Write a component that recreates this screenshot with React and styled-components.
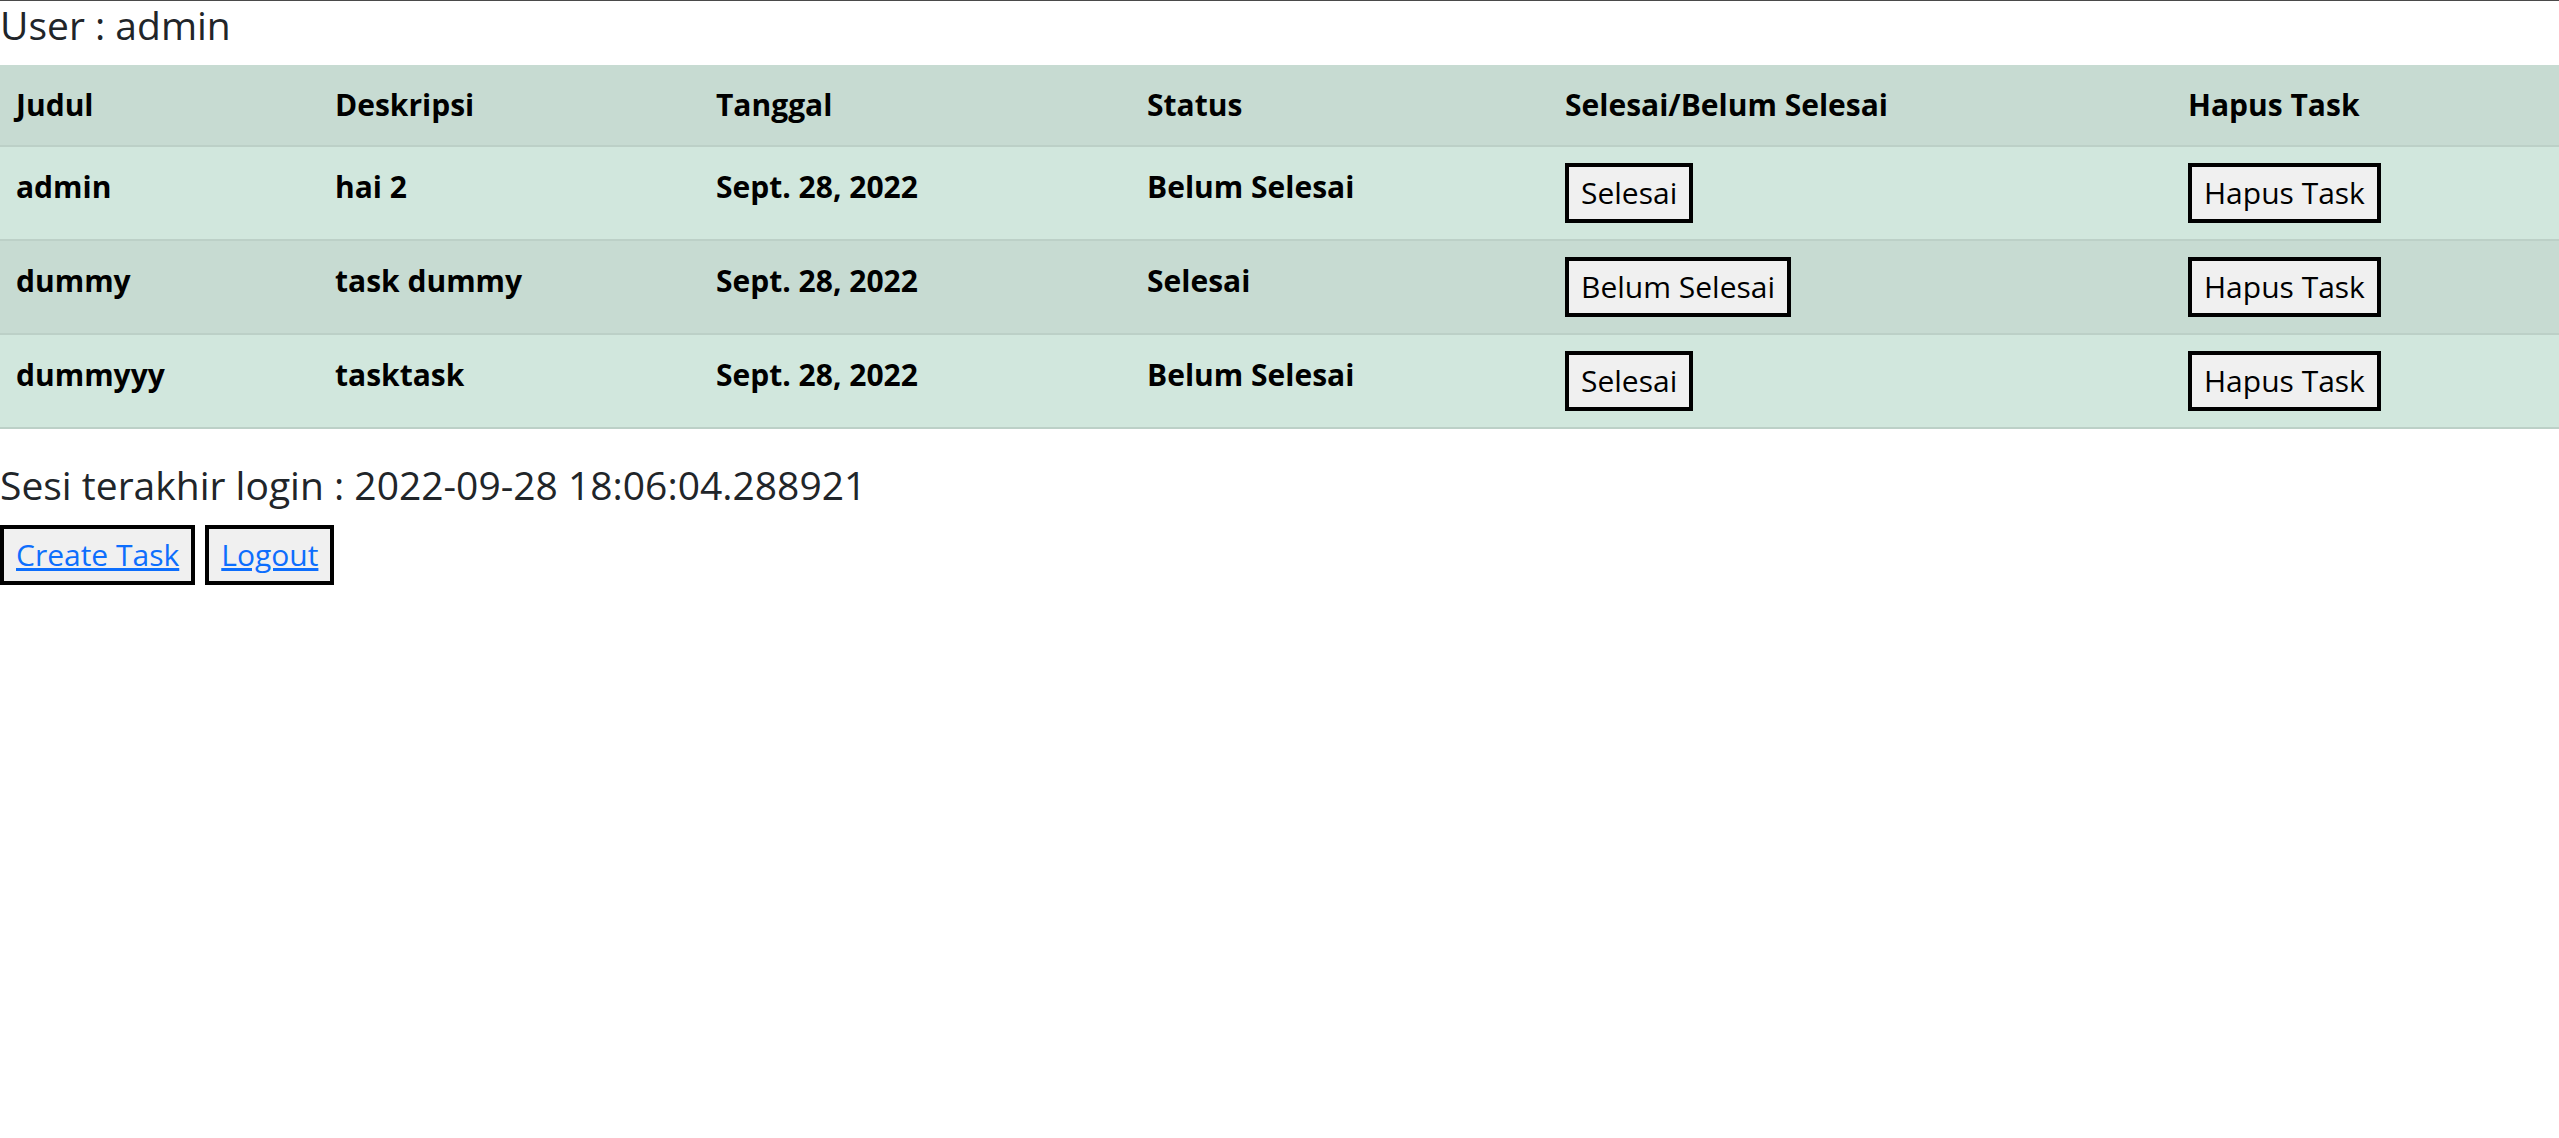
import React from 'react'
import styled, { createGlobalStyle } from 'styled-components'

const GlobalStyle = createGlobalStyle`
  html, body {
    margin: 0;
    padding: 0;
    background: #fff;
  }
  body {
    border-top: 1px solid #4a4a4a;
    font-family: "Open Sans", Lato, sans-serif;
    font-size: 30px;
    line-height: 48px;
    color: #212529;
  }
`

const Page = styled.div`
  display: flex;
  flex-direction: column;
`

const Heading = styled.h5`
  margin: 0 0 16px;
  font-size: 39px;
  font-weight: 400;
  line-height: 48px;
  color: #212529;
`

const Table = styled.table`
  width: 100%;
  margin-bottom: 32px;
  border-collapse: collapse;
  table-layout: fixed;
  color: #000;
`

const Row = styled.tr`
  background: ${(p) => (p.$striped ? '#c7dbd2' : '#d1e7dd')};
  border-bottom: 2px solid #bcd0c7;
`

const Cell = styled.th`
  padding: 16px;
  text-align: left;
  vertical-align: top;
  font-weight: 700;
  line-height: 48px;
`

const Button = styled.button`
  display: inline-block;
  margin: 0;
  padding: 2px 12px;
  font-family: inherit;
  font-size: 30px;
  line-height: 48px;
  color: #000;
  background: #f0f0f0;
  border: 4px solid #000;
  border-radius: 0;
  cursor: pointer;
`

const Actions = styled.div`
  display: flex;
  gap: 10px;
`

const LinkText = styled.a`
  color: #0d6efd;
  text-decoration: underline;
`

const columns = [
  { title: 'Judul', width: 319 },
  { title: 'Deskripsi', width: 381 },
  { title: 'Tanggal', width: 431 },
  { title: 'Status', width: 418 },
  { title: 'Selesai/Belum Selesai', width: 623 },
  { title: 'Hapus Task', width: 387 },
]

const tasks = [
  { judul: 'admin', desc: 'hai 2', tanggal: 'Sept. 28, 2022', done: false },
  { judul: 'dummy', desc: 'task dummy', tanggal: 'Sept. 28, 2022', done: true },
  { judul: 'dummyyy', desc: 'tasktask', tanggal: 'Sept. 28, 2022', done: false },
]

const App = () => {
  return (
    <Page>
      <GlobalStyle />
      <Heading>User : admin</Heading>

      <Table>
        <colgroup>
          {columns.map((c) => (
            <col key={c.title} style={{ width: c.width }} />
          ))}
        </colgroup>
        <tbody>
          <Row $striped>
            {columns.map((c) => (
              <Cell key={c.title}>{c.title}</Cell>
            ))}
          </Row>
          {tasks.map((t, i) => (
            <Row key={t.judul} $striped={i % 2 === 1}>
              <Cell as="td">{t.judul}</Cell>
              <Cell as="td">{t.desc}</Cell>
              <Cell as="td">{t.tanggal}</Cell>
              <Cell as="td">{t.done ? 'Selesai' : 'Belum Selesai'}</Cell>
              <Cell as="td">
                <Button>{t.done ? 'Belum Selesai' : 'Selesai'}</Button>
              </Cell>
              <Cell as="td">
                <Button>Hapus Task</Button>
              </Cell>
            </Row>
          ))}
        </tbody>
      </Table>

      <Heading>Sesi terakhir login : 2022-09-28 18:06:04.288921</Heading>
      <Actions>
        <Button><LinkText href="#">Create Task</LinkText></Button>
        <Button><LinkText href="#">Logout</LinkText></Button>
      </Actions>
    </Page>
  )
}

export default App
